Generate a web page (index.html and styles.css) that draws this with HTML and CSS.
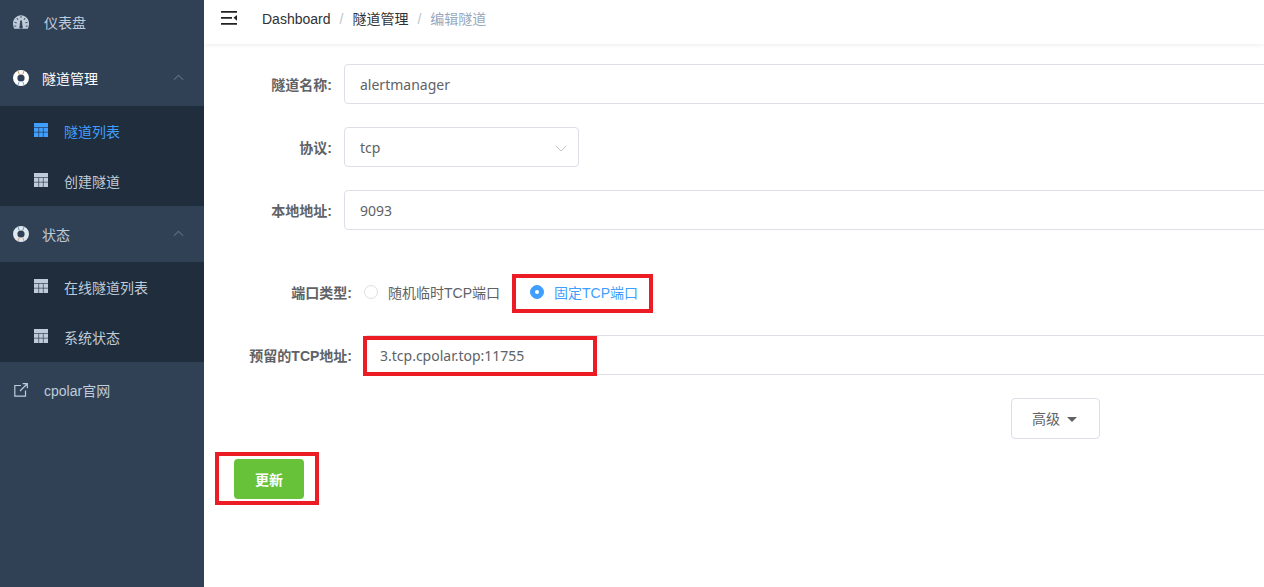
FILE: index.html
```html
<!DOCTYPE html>
<html lang="zh-CN">
<head>
<meta charset="utf-8">
<title>编辑隧道</title>
<link rel="stylesheet" href="styles.css">
</head>
<body>
<div class="app">
  <aside class="sidebar">
    <a class="item first"><svg class="ic" viewBox="0 0 14 12"><path class="f" d="M7 0C3.100 0 0 3.200 0 7.200c0 1.700.4 3.400 1.100 4.800h11.800c.7-1.400 1.100-3.100 1.100-4.800C14 3.200 10.900 0 7 0z"/><path class="gd" d="M6 11.300 6.700 5h.7l.7 6.300zM3.400 2.500l1 1.700M10.600 2.500l-1 1.700M1.300 6.300l1.900.5M12.700 6.300l-1.900.5M1.200 9.600h1.700M12.800 9.600h-1.700M7 .6v1.800"/></svg><span class="t">仪表盘</span></a>

    <a class="item open"><svg class="ic ring" viewBox="0 0 16 16"><circle cx="8" cy="8" r="5.800" fill="none" stroke="#fff" stroke-width="4.400"/><path d="M5 1 6.300 4.600M11 1 9.700 4.600" stroke="#d99a5e" stroke-width="1"/><path d="M5 15 6.300 11.400M11 15 9.700 11.400" stroke="#7fa6d8" stroke-width="1"/></svg><span class="t2">隧道管理</span><svg class="chev" viewBox="0 0 10 6"><path d="M.8 5.200 5 1l4.200 4.200"/></svg></a>
    <div class="sub">
      <a class="subitem on"><svg class="tb" viewBox="0 0 14 14"><path d="M0 0h14v14H0z"/><path class="ln" d="M0 4.500h14M0 9.200h14M4.700 4.500V14M9.300 4.500V14"/></svg><span>隧道列表</span></a>
      <a class="subitem"><svg class="tb" viewBox="0 0 14 14"><path d="M0 0h14v14H0z"/><path class="ln" d="M0 4.500h14M0 9.200h14M4.700 4.500V14M9.300 4.500V14"/></svg><span>创建隧道</span></a>
    </div>

    <a class="item"><svg class="ic ring" viewBox="0 0 16 16"><circle cx="8" cy="8" r="5.800" fill="none" stroke="#dfe7ef" stroke-width="4.400"/><path d="M5 1 6.300 4.600M11 1 9.700 4.600" stroke="#6f93b5" stroke-width="1"/><path d="M5 15 6.300 11.400M11 15 9.700 11.400" stroke="#c9a27e" stroke-width="1"/></svg><span class="t2">状态</span><svg class="chev" viewBox="0 0 10 6"><path d="M.8 5.200 5 1l4.200 4.200"/></svg></a>
    <div class="sub">
      <a class="subitem"><svg class="tb" viewBox="0 0 14 14"><path d="M0 0h14v14H0z"/><path class="ln" d="M0 4.500h14M0 9.200h14M4.700 4.500V14M9.300 4.500V14"/></svg><span>在线隧道列表</span></a>
      <a class="subitem"><svg class="tb" viewBox="0 0 14 14"><path d="M0 0h14v14H0z"/><path class="ln" d="M0 4.500h14M0 9.200h14M4.700 4.500V14M9.300 4.500V14"/></svg><span>系统状态</span></a>
    </div>

    <a class="item"><svg class="ic" viewBox="0 0 14 14"><path class="s" d="M7 2.500H.8v10.700h10.700V7.500M6 8l7-7M8.700.7h4.600v4.600"/></svg><span class="t">cpolar官网</span></a>
  </aside>

  <main class="main">
    <header class="navbar">
      <svg class="hamb" viewBox="0 0 16 14"><path d="M0 0h16v1.700H0zM0 6h11v1.700H0zM0 12h16v1.700H0zM16 4v5.700l-3.500-2.900z"/></svg>
      <nav class="crumbs">
        <span class="c1">Dashboard</span><i>/</i><span class="c1">隧道管理</span><i>/</i><span class="c2">编辑隧道</span>
      </nav>
    </header>

    <form class="form">
      <div class="row r1"><label class="lab">隧道名称:</label><div class="input wide">alertmanager</div></div>
      <div class="row r2"><label class="lab">协议:</label>
        <div class="input select">tcp<svg class="sel" viewBox="0 0 12 7"><path d="M.7.7 6 6 11.300.7"/></svg></div></div>
      <div class="row r2"><label class="lab">本地地址:</label><div class="input wide">9093</div></div>

      <div class="row radios"><label class="lab long">端口类型:</label>
        <span class="radio"></span><span class="rtext">随机临时TCP端口</span>
        <span class="radio checked"></span><span class="rtext blue">固定TCP端口</span>
      </div>

      <div class="row r5"><label class="lab long">预留的TCP地址:</label><div class="input wide">3.tcp.cpolar.top:11755</div></div>

      <div class="adv"><button type="button" class="btn"><span class="btxt">高级</span><span class="caret"></span></button></div>
      <button type="button" class="submit">更新</button>
    </form>

    <div class="mark m1"></div>
    <div class="mark m2"></div>
    <div class="mark m3"></div>
  </main>
</div>
</body>
</html>
```
FILE: styles.css
```css
* { box-sizing: border-box; }
html, body { margin: 0; height: 100%; overflow: hidden; background: #fff; }
body { font-family: "Noto Sans", "Noto Sans CJK SC", sans-serif; font-size: 14px; color: #606266; }

.app { display: flex; height: 587px; width: 1264px; overflow: hidden; }

.sidebar { flex: 0 0 204px; background: #304156; color: #bfcbd9; overflow: hidden; }
.item { display: flex; align-items: center; height: 56px; padding-left: 13px; position: relative; font-family: "Liberation Sans", "Noto Sans CJK SC", sans-serif; }
.item.first { margin-top: -6px; }
.ic { width: 16px; height: 14px; flex: none; }
.ic.ring { width: 16px; height: 16px; }
.f { fill: #bfcbd9; }
.gd { fill: #304156; stroke: #304156; stroke-width: .8; }
.s { fill: none; stroke: #bfcbd9; stroke-width: 1.200; }
.t { margin-left: 15px; }
.t2 { margin-left: 13px; }
.open .t2 { color: #fff; }
.chev { position: absolute; left: 173px; top: 24px; width: 11px; height: 7px; }
.chev path { fill: none; stroke: #5b6b7e; stroke-width: 1; }
.sub { background: #1f2d3d; }
.subitem { display: flex; align-items: center; height: 50px; padding-left: 34px; font-family: "Noto Sans CJK SC", sans-serif; }
.subitem span { margin-left: 16px; }
.tb { width: 14px; height: 14px; flex: none; margin-top: -3px; }
.tb > path:first-child { fill: #bfcbd9; }
.tb .ln { fill: none; stroke: #1f2d3d; stroke-width: .6; }
.subitem.on { color: #409eff; }
.subitem.on .tb > path:first-child { fill: #409eff; }

.main { flex: 1; min-width: 0; position: relative; overflow: hidden; }
.navbar { display: flex; align-items: center; height: 44px; padding: 0 0 8px 17px; box-shadow: 0 1px 4px rgba(0, 21, 41, .08); background: #fff; }
.hamb { width: 16px; height: 14px; fill: #222; flex: none; margin-top: -1px; }
.crumbs { margin-left: 25px; display: flex; align-items: baseline; font-family: "Liberation Sans", "Noto Sans CJK SC", sans-serif; }
.crumbs i { font-style: normal; color: #c0c4cc; margin: 0 9px; }
.c1 { color: #303133; }
.c2 { color: #97a8be; }

.form { padding: 20px 0 0 8px; display: flex; flex-direction: column; }
.row { display: flex; align-items: center; }
.r2 { margin-top: 23px; }
.lab { width: 120px; text-align: right; margin-right: 12px; font-weight: 700; color: #606266; flex: none; font-family: "Liberation Sans", "Noto Sans CJK SC", sans-serif; }
.lab.long { width: 140px; }
.input { height: 40px; border: 1px solid #dcdfe6; border-radius: 4px; background: #fff; padding: 0 15px; display: flex; align-items: center; position: relative; flex: none; }
.wide { width: 1000px; }
.select { width: 235px; }
.sel { position: absolute; right: 11px; top: 17px; width: 12px; height: 7px; }
.sel path { fill: none; stroke: #c0c4cc; stroke-width: 1; }

.radios { margin-top: 46px; height: 32px; }
.radio { width: 14px; height: 14px; border: 1px solid #dcdfe6; border-radius: 50%; flex: none; background: #fff; }
.radio.checked { background: #409eff; border-color: #409eff; margin-left: 30px; position: relative; }
.radio.checked::after { content: ""; position: absolute; left: 4px; top: 4px; width: 4px; height: 4px; border-radius: 50%; background: #fff; }
.rtext { margin-left: 10px; font-family: "Liberation Sans", "Noto Sans CJK SC", sans-serif; }
.blue { color: #409eff; }

.r5 { margin-top: 27px; }
.adv { margin-top: 23px; padding-left: 799px; }
.btn { width: 89px; height: 41px; border: 1px solid #dcdfe6; border-radius: 4px; background: #fff; color: #606266; font: 14px "Noto Sans CJK SC", sans-serif; display: flex; align-items: center; justify-content: center; padding: 0 2px 2px 0; }
.caret { width: 0; height: 0; border: 5px solid transparent; border-top-color: #606266; border-bottom: 0; margin: 3px 0 0 7px; }
.submit { margin: 20px 0 0 22px; width: 70px; height: 40px; border: 0; border-radius: 4px; background: #67c23a; color: #fff; font: 700 14px "Noto Sans CJK SC", sans-serif; }

.mark { position: absolute; border: 4px solid #ec1c24; }
.m1 { left: 308px; top: 274px; width: 141px; height: 39px; }
.m2 { left: 159px; top: 336px; width: 234px; height: 40px; }
.m3 { left: 11px; top: 452px; width: 104px; height: 53px; }
```
